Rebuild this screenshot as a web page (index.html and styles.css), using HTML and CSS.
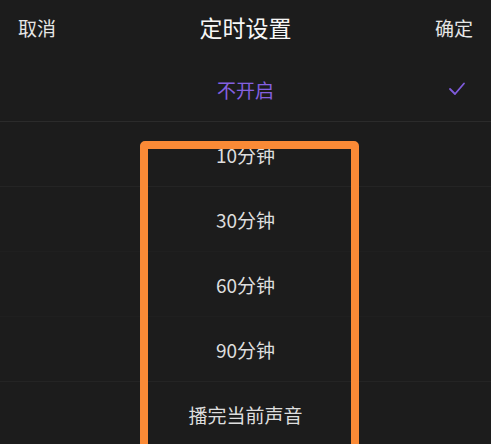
FILE: index.html
```html
<!DOCTYPE html>
<html lang="zh-CN">
<head>
<meta charset="utf-8">
<link rel="stylesheet" href="styles.css">
</head>
<body>
<div class="sheet">
  <header class="bar">
    <span class="btn">取消</span>
    <h1 class="title">定时设置</h1>
    <span class="btn">确定</span>
  </header>
  <ul class="list">
    <li class="item active">不开启
      <svg class="check" width="18" height="14" viewBox="0 0 18 14"><polyline points="2,7 7,12 16,1.5" fill="none" stroke="#7f5bdc" stroke-width="1.8" stroke-linecap="round" stroke-linejoin="round"/></svg>
    </li>
    <li class="item faint">10分钟</li>
    <li class="item">30分钟</li>
    <li class="item">60分钟</li>
    <li class="item faint">90分钟</li>
    <li class="item">播完当前声音</li>
  </ul>
  <div class="highlight"></div>
</div>
</body>
</html>
```
FILE: styles.css
```css
html, body {
  margin: 0;
  padding: 0;
  background: #1c1c1c;
}
.sheet {
  position: relative;
  width: 491px;
  height: 444px;
  overflow: hidden;
  font-family: "Noto Sans CJK SC", "Noto Sans", sans-serif;
  background: #1c1c1c;
}
.bar {
  height: 57px;
  display: flex;
  align-items: center;
  justify-content: space-between;
  padding: 0 18px 2px 18px;
  box-sizing: border-box;
}
.btn {
  font-size: 19px;
  color: #e6e6e6;
  line-height: 1;
}
.title {
  margin: 0;
  font-size: 23px;
  font-weight: 400;
  color: #f7f7f7;
  line-height: 1;
}
.list {
  list-style: none;
  margin: 0;
  padding: 0;
}
.item {
  position: relative;
  height: 64px;
  box-sizing: content-box;
  display: flex;
  align-items: center;
  justify-content: center;
  padding-bottom: 0;
  font-size: 19px;
  line-height: 1;
  color: #dedede;
  border-bottom: 1px solid #1f1f1f;
}
.item.faint {
  border-bottom-color: #242424;
}
.item:first-child {
  border-bottom-color: #2b2b2b;
}
.item.active {
  color: #8460e0;
}
.check {
  position: absolute;
  right: 25px;
  top: 25px;
}
.highlight {
  position: absolute;
  left: 140px;
  top: 141px;
  width: 219px;
  height: 340px;
  box-sizing: border-box;
  border: 8px solid #fa8a36;
  border-radius: 5px;
}
```
